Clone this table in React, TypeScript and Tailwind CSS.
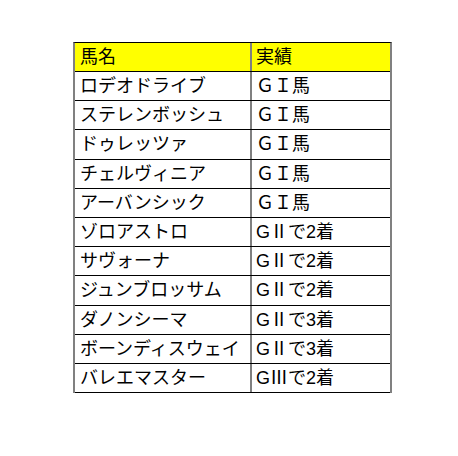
const rows: [string, string][] = [
  ['ロデオドライブ', 'ＧＩ馬'],
  ['ステレンボッシュ', 'ＧＩ馬'],
  ['ドゥレッツァ', 'ＧＩ馬'],
  ['チェルヴィニア', 'ＧＩ馬'],
  ['アーバンシック', 'ＧＩ馬'],
  ['ゾロアストロ', 'GⅡで2着'],
  ['サヴォーナ', 'GⅡで2着'],
  ['ジュンブロッサム', 'GⅡで2着'],
  ['ダノンシーマ', 'GⅡで3着'],
  ['ボーンディスウェイ', 'GⅡで3着'],
  ['バレエマスター', 'GⅢで2着'],
];

export default function App() {
  return (
    <div
      className="w-[458px] h-[456px] bg-white pt-[42px] pl-[73px]"
      style={{ fontFamily: '"Liberation Sans", "Noto Sans CJK JP", sans-serif' }}
    >
      <div className="w-[319px] border-t border-black border-x-2 border-x-[#808080] text-[18px] leading-none text-black">
        <div className="flex h-[29px] bg-[#ffff00] border-b border-black">
          <div className="w-[177px] border-r-2 border-[#808080] pl-[5px] flex items-center">馬名</div>
          <div className="flex-1 pl-[4px] flex items-center">実績</div>
        </div>
        {rows.map(([name, result]) => (
          <div key={name} className="flex h-[29.2px] border-b border-black">
            <div className="w-[177px] border-r-2 border-[#808080] pl-[5px] flex items-center whitespace-nowrap">
              {name}
            </div>
            <div className="flex-1 pl-[4px] flex items-center whitespace-nowrap">{result}</div>
          </div>
        ))}
      </div>
    </div>
  );
}
